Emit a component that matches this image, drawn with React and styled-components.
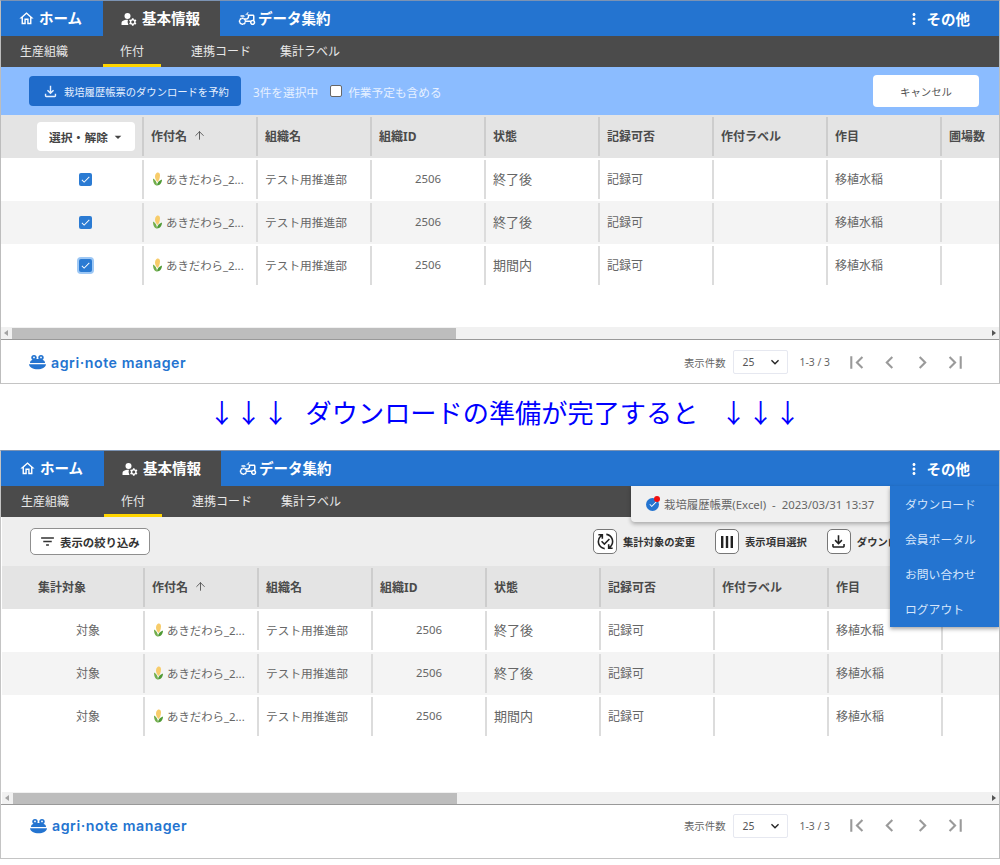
import React from "react";
import styled, { createGlobalStyle } from "styled-components";
import { ArrowUp } from "lucide-react";
import {
  MdOutlineHome, MdManageAccounts, MdOutlineAgriculture, MdMoreVert, MdFilterList,
  MdOutlinePublishedWithChanges, MdFirstPage, MdLastPage, MdChevronLeft, MdChevronRight,
  MdKeyboardArrowDown, MdArrowDropDown, MdOutlineFileDownload, MdCheck,
} from "react-icons/md";

const Global = createGlobalStyle`
  html, body { margin: 0; padding: 0; background: #fff; }
  body { font-family: "Noto Sans", "Noto Sans CJK JP", sans-serif; width: 1000px; height: 865px; overflow: hidden; }
  * { box-sizing: border-box; }
`;

const Page = styled.div`
  width: 1000px;
  height: 865px;
  display: flex;
  flex-direction: column;
`;
const Panel = styled.section`
  position: relative;
  height: ${p => p.$h}px;
  display: flex;
  flex-direction: column;
  border-top: 1px solid #7c93b3;
  border-bottom: 1px solid #c4c4c4;
  border-left: 1px solid ${p => (p.$wide ? "#c4c4c4" : "#bdbdbd")};
  border-right: 1px solid #bdbdbd;
  padding-left: ${p => (p.$wide ? 1 : 0)}px;
  overflow: hidden;
`;
const Nav = styled.nav`
  height: 35px;
  flex: none;
  margin-left: ${p => (p.$wide ? -1 : 0)}px;
  padding-left: ${p => (p.$wide ? 1 : 0)}px;
  background: #2474d0;
  display: flex;
  align-items: stretch;
  color: #fff;
`;
const NavTab = styled.div`
  width: ${p => p.$w}px;
  display: flex;
  align-items: center;
  gap: ${p => p.$gap}px;
  padding-left: ${p => p.$pl}px;
  background: ${p => (p.$active ? "#4b4b4b" : "transparent")};
  font-size: 14.5px;
  font-weight: 700;
  line-height: 1;
  svg { flex: none; }
`;
const NavMore = styled.div`
  margin-left: auto;
  margin-right: 29px;
  display: flex;
  align-items: center;
  gap: 4px;
  font-size: 14.5px;
  font-weight: 700;
`;
const SubNav = styled.div`
  height: 31px;
  flex: none;
  margin-left: ${p => (p.$wide ? -1 : 0)}px;
  padding-left: ${p => (p.$wide ? 1 : 0)}px;
  background: #4b4b4b;
  display: flex;
  align-items: stretch;
`;
const SubTab = styled.div`
  position: relative;
  margin-left: ${p => p.$ml}px;
  display: flex;
  align-items: center;
  font-size: 12px;
  color: #e8e8e8;
  line-height: 1;
  ${p => p.$active && `
    &::after {
      content: "";
      position: absolute;
      left: -17px;
      right: -17px;
      bottom: 0;
      height: 3px;
      background: #ffd500;
    }
  `}
`;
const ActionBar = styled.div`
  height: 48px;
  flex: none;
  background: #8bbcff;
  display: flex;
  align-items: center;
  padding: 0 20px 0 28px;
  color: #e6f0ff;
  font-size: 11.7px;
`;
const ReserveButton = styled.div`
  width: 212px;
  height: 30px;
  margin-right: 12px;
  border-radius: 4px;
  background: #1f6bca;
  color: #e6f0ff;
  display: flex;
  align-items: center;
  gap: 5px;
  padding-left: 13px;
  font-size: 10.3px;
  white-space: nowrap;
`;
const Box = styled.span`
  width: 12px;
  height: 12px;
  margin: 0 6px 0 12px;
  background: #fff;
  border: 1px solid #666;
  border-radius: 2px;
`;
const CancelButton = styled.div`
  margin-left: auto;
  width: 106px;
  height: 32px;
  border-radius: 4px;
  background: #fff;
  color: #555;
  font-size: 10.4px;
  display: flex;
  align-items: center;
  justify-content: center;
`;
const Toolbar = styled.div`
  height: 49px;
  flex: none;
  background: #eeeeee;
  display: flex;
  align-items: center;
  padding-left: 28px;
`;
const FilterButton = styled.div`
  width: 120px;
  height: 27px;
  border: 1px solid #8f8f8f;
  border-radius: 5px;
  background: #fff;
  display: flex;
  align-items: center;
  gap: 4px;
  padding-left: 8px;
  font-size: 11.4px;
  font-weight: 700;
  color: #333;
  white-space: nowrap;
`;
const Tools = styled.div`
  margin-left: auto;
  display: flex;
  align-items: center;
  gap: 20px;
  width: 406px;
`;
const Tool = styled.div`
  display: flex;
  align-items: center;
  gap: 6px;
  font-size: 10.3px;
  font-weight: 700;
  color: #333;
  white-space: nowrap;
`;
const ToolIcon = styled.span`
  width: 24px;
  height: 25px;
  border: 1px solid #777;
  border-radius: 5px;
  background: #fff;
  display: flex;
  align-items: center;
  justify-content: center;
  color: #222;
`;
const TableArea = styled.div`
  flex: 1;
  min-height: 0;
  overflow: hidden;
`;
const Row = styled.div`
  height: 43px;
  width: 1040px;
  display: grid;
  grid-template-columns: 141px repeat(8, 114px);
  background: ${p => (p.$head ? "#e4e4e4" : p.$alt ? "#f4f4f4" : "#fff")};
  color: ${p => (p.$head ? "#4b4b4b" : "#666")};
  font-size: 12px;
  font-weight: ${p => (p.$head ? 700 : 400)};
`;
const Cell = styled.div`
  margin: 2px 0;
  padding: 0 0 2px 7px;
  display: flex;
  align-items: center;
  gap: ${p => p.$gap || 0}px;
  white-space: nowrap;
  overflow: hidden;
  font-size: ${p => p.$fs || 12}px;
  border-left: 2px solid ${p => (p.$head ? "#cdcdcd" : "#dcdcdc")};
`;
const FirstCell = styled.div`
  display: flex;
  align-items: center;
  padding-left: ${p => p.$pl}px;
  padding-bottom: ${p => p.$pb || 0}px;
`;
const NumberCell = styled(Cell)`
  padding-left: 43px;
`;
const CornSlot = styled.span`
  display: flex;
  margin-left: 2px;
`;
const SelectButton = styled.div`
  width: 98px;
  height: 29px;
  border-radius: 4px;
  background: #fff;
  display: flex;
  align-items: center;
  justify-content: center;
  gap: 2px;
  padding-left: 3px;
  font-size: 11.8px;
  font-weight: 700;
  color: #444;
`;
const Tick = styled.span`
  width: 13px;
  height: 13px;
  border-radius: 2px;
  background: #2b7bd3;
  color: #fff;
  display: flex;
  align-items: center;
  justify-content: center;
  box-shadow: ${p => (p.$focus ? "0 0 0 2px #9ec8f5" : "none")};
`;
const Scrollbar = styled.div`
  height: 12px;
  flex: none;
  background: #f1f1f1;
  display: flex;
  align-items: center;
  justify-content: space-between;
  position: relative;
`;
const ScrollThumb = styled.div`
  position: absolute;
  left: 11px;
  top: 1px;
  bottom: 0;
  width: 444px;
  background: #bdbdbd;
`;
const Arrow = styled.span`
  width: 0;
  height: 0;
  margin: 0 3px;
  border-top: 3px solid transparent;
  border-bottom: 3px solid transparent;
  ${p => (p.$right ? "border-left: 4px solid #555;" : "border-right: 4px solid #a3a3a3;")}
`;
const Footer = styled.footer`
  flex: none;
  height: ${p => p.$h}px;
  border-top: 1px solid #999;
  margin-left: ${p => (p.$wide ? -1 : 0)}px;
  padding: ${p => (p.$wide ? "0 31px 12px 29px" : "1px 31px 0 28px")};
  display: flex;
  align-items: center;
  background: #fff;
`;
const Logo = styled.div`
  display: flex;
  align-items: center;
  gap: 5px;
  color: #2474d0;
  font-family: Inter, sans-serif;
  font-size: 14.2px;
  font-weight: 600;
  letter-spacing: 0.55px;
`;
const Pager = styled.div`
  margin-left: auto;
  display: flex;
  align-items: center;
  color: #666;
  font-size: 10.4px;
`;
const PerPage = styled.div`
  width: 55px;
  height: 24px;
  margin: 0 12px 0 7px;
  padding: 0 4px 0 9px;
  border: 1px solid #e6e8f0;
  border-radius: 2px;
  display: flex;
  align-items: center;
  justify-content: space-between;
  color: #555;
  svg { color: #222; }
`;
const PagerIcons = styled.div`
  margin-left: 14px;
  display: flex;
  gap: 8px;
  color: #9a9a9a;
`;
const Caption = styled.div`
  height: 66px;
  flex: none;
  display: flex;
  align-items: center;
  justify-content: center;
  padding: 0 0 10px 10px;
  color: #0000ff;
  font-size: 26.2px;
  font-family: "Noto Sans CJK JP", sans-serif;
  line-height: 1;
  white-space: pre;
`;
const CaptionArrows = styled.span`
  letter-spacing: 0.8px;
  margin: 0 ${p => p.$r || 0}px 0 ${p => p.$l || 0}px;
`;
const Notice = styled.div`
  position: absolute;
  left: 630px;
  top: 35px;
  width: 260px;
  height: 36px;
  background: #f0f0f0;
  border-radius: 0 0 4px 4px;
  box-shadow: 0 2px 4px rgba(0, 0, 0, 0.3);
  display: flex;
  align-items: center;
  gap: 5px;
  padding-left: 15px;
  font-size: 11.4px;
  color: #666;
  white-space: pre;
  z-index: 2;
`;
const NoticeIcon = styled.span`
  position: relative;
  width: 13px;
  height: 13px;
  border-radius: 50%;
  background: #2474d0;
  color: #fff;
  display: flex;
  align-items: center;
  justify-content: center;
  &::after {
    content: "";
    position: absolute;
    right: -1px;
    top: -2px;
    width: 6px;
    height: 6px;
    border-radius: 50%;
    background: #f01010;
  }
`;
const Menu = styled.div`
  position: absolute;
  left: 889px;
  top: 35px;
  right: -1px;
  height: 141px;
  padding: 0 0 0 15px;
  background: #2474d0;
  box-shadow: 0 2px 4px rgba(0, 0, 0, 0.35);
  display: grid;
  grid-auto-rows: 35px;
  align-items: center;
  color: #d6e6fb;
  font-size: 11.8px;
  z-index: 3;
`;

const Corn = () => (
  <svg width="9" height="14" viewBox="0 0 9 14" aria-hidden="true">
    <path d="M3.500 1C5.500 0 7 1 7 3.500 7 6 6 8.500 4.500 10 3 8.500 2 6.500 2 4.500 2 3 2.500 1.800 3.500 1z" fill="#f7cc6a" />
    <path d="M0 6.500C2 7.500 4 10 4 13.500 1.800 13.500 0 11 0 6.500z" fill="#72ad4a" />
    <path d="M9 7.500c0 3-2 6-5 6 0-3 2-5 5-6z" fill="#4f9a35" />
  </svg>
);

const Frog = () => (
  <svg width="17" height="16" viewBox="0 0 17 16" aria-hidden="true">
    <circle cx="5" cy="3.600" r="2.700" fill="#2474d0" />
    <circle cx="12" cy="3.600" r="2.700" fill="#2474d0" />
    <circle cx="5" cy="3.400" r="0.900" fill="#fff" />
    <circle cx="12" cy="3.400" r="0.900" fill="#fff" />
    <path d="M1 9c0-3 3-4 7.500-4S16 6 16 9z" fill="#2474d0" />
    <path d="M0 10.200h17c-.5 3.500-4 5-8.500 5S.5 13.700 0 10.200z" fill="#2474d0" />
  </svg>
);

const Bars = () => (
  <svg width="14" height="14" viewBox="0 0 14 14" aria-hidden="true">
    <path d="M1 1h2.400v12H1zM5.800 1h2.400v12H5.800zM10.600 1H13v12h-2.400z" fill="#222" />
  </svg>
);

const Columns = ["組織ID", "状態", "記録可否", "作付ラベル", "作目", "圃場数"];
const rows = [
  { state: "終了後" },
  { state: "終了後", alt: true },
  { state: "期間内", focus: true },
];

const TopNav = ({ wide }) => (
  <>
    <Nav $wide={wide}>
      <NavTab $w={102} $pl={17} $gap={4}><MdOutlineHome size={17} />ホーム</NavTab>
      <NavTab $w={117} $pl={17} $gap={4} $active><MdManageAccounts size={18} />基本情報</NavTab>
      <NavTab $w={140} $pl={18} $gap={2}><MdOutlineAgriculture size={18} />データ集約</NavTab>
      <NavMore><MdMoreVert size={18} />その他</NavMore>
    </Nav>
    <SubNav $wide={wide}>
      <SubTab $ml={19}>生産組織</SubTab>
      <SubTab $ml={52} $active>作付</SubTab>
      <SubTab $ml={47}>連携コード</SubTab>
      <SubTab $ml={29}>集計ラベル</SubTab>
    </SubNav>
  </>
);

const Head = ({ first }) => (
  <Row $head>
    {first}
    <Cell $head $gap={6}>作付名<ArrowUp size={13} strokeWidth={1.6} /></Cell>
    <Cell $head>組織名</Cell>
    {Columns.map(c => <Cell $head key={c}>{c}</Cell>)}
  </Row>
);

const Body = ({ renderFirst }) =>
  rows.map((r, i) => (
    <Row key={i} $alt={r.alt}>
      {renderFirst(r)}
      <Cell $gap={4} $fs={11.4}><CornSlot><Corn /></CornSlot>あきだわら_2...</Cell>
      <Cell $fs={11.7}>テスト用推進部</Cell>
      <NumberCell $fs={11.4}>2506</NumberCell>
      <Cell $fs={13}>{r.state}</Cell>
      <Cell>記録可</Cell>
      <Cell />
      <Cell>移植水稲</Cell>
      <Cell />
    </Row>
  ));

const Bottom = ({ h, wide }) => (
  <>
    <Scrollbar>
      <Arrow />
      <ScrollThumb />
      <Arrow $right />
    </Scrollbar>
    <Footer $h={h} $wide={wide}>
      <Logo><Frog />agri·note manager</Logo>
      <Pager>
        表示件数
        <PerPage>25<MdKeyboardArrowDown size={16} /></PerPage>
        1-3 / 3
        <PagerIcons>
          <MdFirstPage size={25} />
          <MdChevronLeft size={25} />
          <MdChevronRight size={25} />
          <MdLastPage size={25} />
        </PagerIcons>
      </Pager>
    </Footer>
  </>
);

export default function App() {
  return (
    <Page>
      <Global />
      <Panel $h={384}>
        <TopNav />
        <ActionBar>
          <ReserveButton><MdOutlineFileDownload size={17} />栽培履歴帳票のダウンロードを予約</ReserveButton>
          3件を選択中
          <Box />
          作業予定も含める
          <CancelButton>キャンセル</CancelButton>
        </ActionBar>
        <TableArea>
          <Head first={<FirstCell $pl={36}><SelectButton>選択・解除<MdArrowDropDown size={16} /></SelectButton></FirstCell>} />
          <Body renderFirst={r => (
            <FirstCell $pl={78}><Tick $focus={r.focus}><MdCheck size={11} /></Tick></FirstCell>
          )} />
        </TableArea>
        <Bottom h={44} />
      </Panel>
      <Caption>
        <CaptionArrows $r={16}>↓↓↓</CaptionArrows>
        ダウンロードの準備が完了すると
        <CaptionArrows $l={22}>↓↓↓</CaptionArrows>
      </Caption>
      <Panel $h={409} $wide>
        <TopNav wide />
        <Toolbar>
          <FilterButton><MdFilterList size={17} />表示の絞り込み</FilterButton>
          <Tools>
            <Tool><ToolIcon><MdOutlinePublishedWithChanges size={19} /></ToolIcon>集計対象の変更</Tool>
            <Tool><ToolIcon><Bars /></ToolIcon>表示項目選択</Tool>
            <Tool><ToolIcon><MdOutlineFileDownload size={19} /></ToolIcon>ダウンロード</Tool>
          </Tools>
        </Toolbar>
        <TableArea>
          <Head first={<FirstCell $pl={36} $pb={2}>集計対象</FirstCell>} />
          <Body renderFirst={() => <FirstCell $pl={74} $pb={2}>対象</FirstCell>} />
        </TableArea>
        <Bottom h={54} wide />
        <Notice>
          <NoticeIcon><MdCheck size={10} /></NoticeIcon>
          {"栽培履歴帳票(Excel)  -  2023/03/31 13:37"}
        </Notice>
        <Menu>
          <span>ダウンロード</span>
          <span>会員ポータル</span>
          <span>お問い合わせ</span>
          <span>ログアウト</span>
        </Menu>
      </Panel>
    </Page>
  );
}
